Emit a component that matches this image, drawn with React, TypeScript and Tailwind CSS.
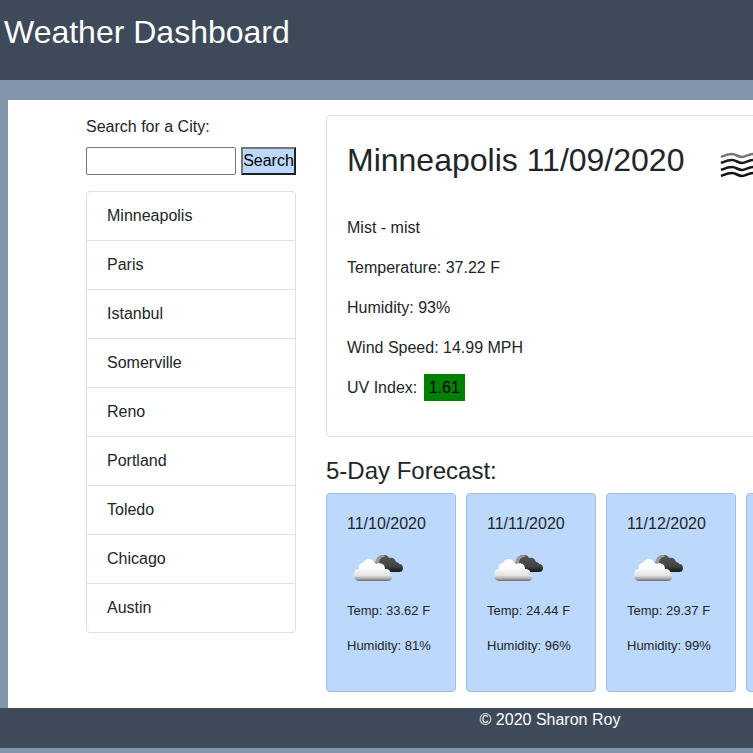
import { useState } from "react";

const cities = ["Minneapolis", "Paris", "Istanbul", "Somerville", "Reno", "Portland", "Toledo", "Chicago", "Austin"];

type Day = { date: string; temp: string; humidity: number };

// The last two days have no reading yet and are shown as blank cards.
const days: (Day | null)[] = [
  { date: "11/10/2020", temp: "33.62", humidity: 81 },
  { date: "11/11/2020", temp: "24.44", humidity: 96 },
  { date: "11/12/2020", temp: "29.37", humidity: 99 },
  null,
  null,
];

function CloudIcon() {
  return (
    <svg className="h-7 w-13" viewBox="0 0 52 28" aria-hidden="true">
      <defs>
        <linearGradient id="frontCloud" x1="0" y1="0" x2="0" y2="1">
          <stop offset="0" stopColor="#ffffff" />
          <stop offset="0.45" stopColor="#fafafa" />
          <stop offset="0.75" stopColor="#e2e2e2" />
          <stop offset="0.88" stopColor="#b0b0b0" />
          <stop offset="1" stopColor="#6c6c6c" />
        </linearGradient>
        <linearGradient id="backCloud" x1="0" y1="0" x2="0" y2="1">
          <stop offset="0" stopColor="#555555" />
          <stop offset="0.65" stopColor="#444444" />
          <stop offset="1" stopColor="#161616" />
        </linearGradient>
      </defs>
      <path
        d="M23 9 C23 4 26 1 31 1 C34 1 35 2 36 4 C39 3 42 4 43 8 C45 8 46 9 46 10 C49 10 50 12 50 14 C50 17 48 18 46 18 H34 L24 12 Z"
        fill="url(#backCloud)"
      />
      <path d="M22 9 C23 3 27 1 31 1 L32 3 C28 3 26 5 26 10 Z" fill="#9a9a9a" />
      <path
        d="M6 27 C3 27 1 24 1 21 C1 17 3 15 6 15 C5 11 7 9 10 9 C11 6 14 5 16 5 C19 5 21 7 22 10 C28 8 32 10 32 15 C36 15 38 17 37 20 C41 22 39 27 35 27 Z"
        fill="url(#frontCloud)"
      />
    </svg>
  );
}

function MistIcon() {
  return (
    <svg className="h-7 w-11" viewBox="0 0 44 28" fill="none" strokeWidth="2.6" aria-hidden="true">
      <path d="M1 7 C6 5 8 4 12 4 S18 7 22 7 S28 4 33 4 S39 5 43 7" stroke="#777777" />
      <path d="M1 13 C6 11 8 10 12 10 S18 13 22 13 S28 10 33 10 S39 11 43 13" stroke="#1c1c1c" />
      <path d="M1 20 C6 18 8 17 12 17 S18 20 22 20 S28 17 33 17 S39 18 43 20" stroke="#161616" />
      <path d="M1 26 C6 24 8 23 12 23 S18 26 22 26 S28 23 33 23 S39 24 43 26" stroke="#111111" />
    </svg>
  );
}

export default function App() {
  const [query, setQuery] = useState("");

  return (
    <div className="min-h-screen overflow-hidden bg-[#8395ac] font-['Liberation_Sans',Arial,sans-serif] text-base text-[#212529]">
      <div className="min-w-[1100px]">
        <header className="h-20 bg-[#3e4a59] px-1 pt-3">
          <h1 className="text-[32px] leading-10 text-white">Weather Dashboard</h1>
        </header>

        <main className="mx-2 mt-5 flex gap-[30px] bg-white px-[78px] pt-[15px] pb-4">
          <aside className="w-[210px] shrink-0">
            <form onSubmit={(e) => e.preventDefault()}>
              <label htmlFor="city" className="mb-2 block leading-6">Search for a City:</label>
              <div className="flex gap-[5px]">
                <input
                  id="city"
                  value={query}
                  onChange={(e) => setQuery(e.target.value)}
                  className="h-7 w-[150px] rounded-[2px] border border-[#767676] bg-white px-1"
                />
                <button
                  type="submit"
                  className="h-7 w-[55px] border-2 border-t-[#767676] border-r-[#212121] border-b-[#212121] border-l-[#767676] bg-[#bcd9fd] text-center leading-6 text-black"
                >
                  Search
                </button>
              </div>
            </form>
            <ul className="mt-4 divide-y divide-[#dfdfdf] rounded-sm border border-[#dfdfdf]">
              {cities.map((city) => (
                <li key={city} className="px-5 py-3 leading-6">{city}</li>
              ))}
            </ul>
          </aside>

          <div className="min-w-0 grow">
            <section className="rounded-sm border border-[#dfdfdf] p-5">
              <div className="mb-8 flex h-12 items-center gap-9">
                <h2 className="text-[32px] leading-12">Minneapolis 11/09/2020</h2>
                <div className="pt-2"><MistIcon /></div>
              </div>
              <p className="mb-4 leading-6">Mist - mist</p>
              <p className="mb-4 leading-6">Temperature: 37.22 F</p>
              <p className="mb-4 leading-6">Humidity: 93%</p>
              <p className="mb-4 leading-6">Wind Speed: 14.99 MPH</p>
              <p className="mb-4 leading-6">
                UV Index: <span className="ml-0.5 bg-[#008000] px-[5px] py-[5px] text-black">1.61</span>
              </p>
            </section>

            <h2 className="mt-5 mb-2 text-2xl leading-7">5-Day Forecast:</h2>
            <div className="flex gap-2.5">
              {days.map((day, i) => (
                <article key={i} className="w-[130px] shrink-0 rounded-sm border border-[#a1bddd] bg-[#bcd9fd] px-5 pt-5 pb-9">
                  {day && (
                    <>
                      <h3 className="leading-5">{day.date}</h3>
                      <div className="mt-5 mb-[19px] pl-1.5"><CloudIcon /></div>
                      <p className="mb-4 text-[13px] leading-[19px]">Temp: {day.temp} F</p>
                      <p className="text-[13px] leading-[19px]">Humidity: {day.humidity}%</p>
                    </>
                  )}
                </article>
              ))}
            </div>
          </div>
        </main>

        <footer className="h-10 bg-[#3e4a59] text-center leading-6 text-white">© 2020 Sharon Roy</footer>
      </div>
    </div>
  );
}
